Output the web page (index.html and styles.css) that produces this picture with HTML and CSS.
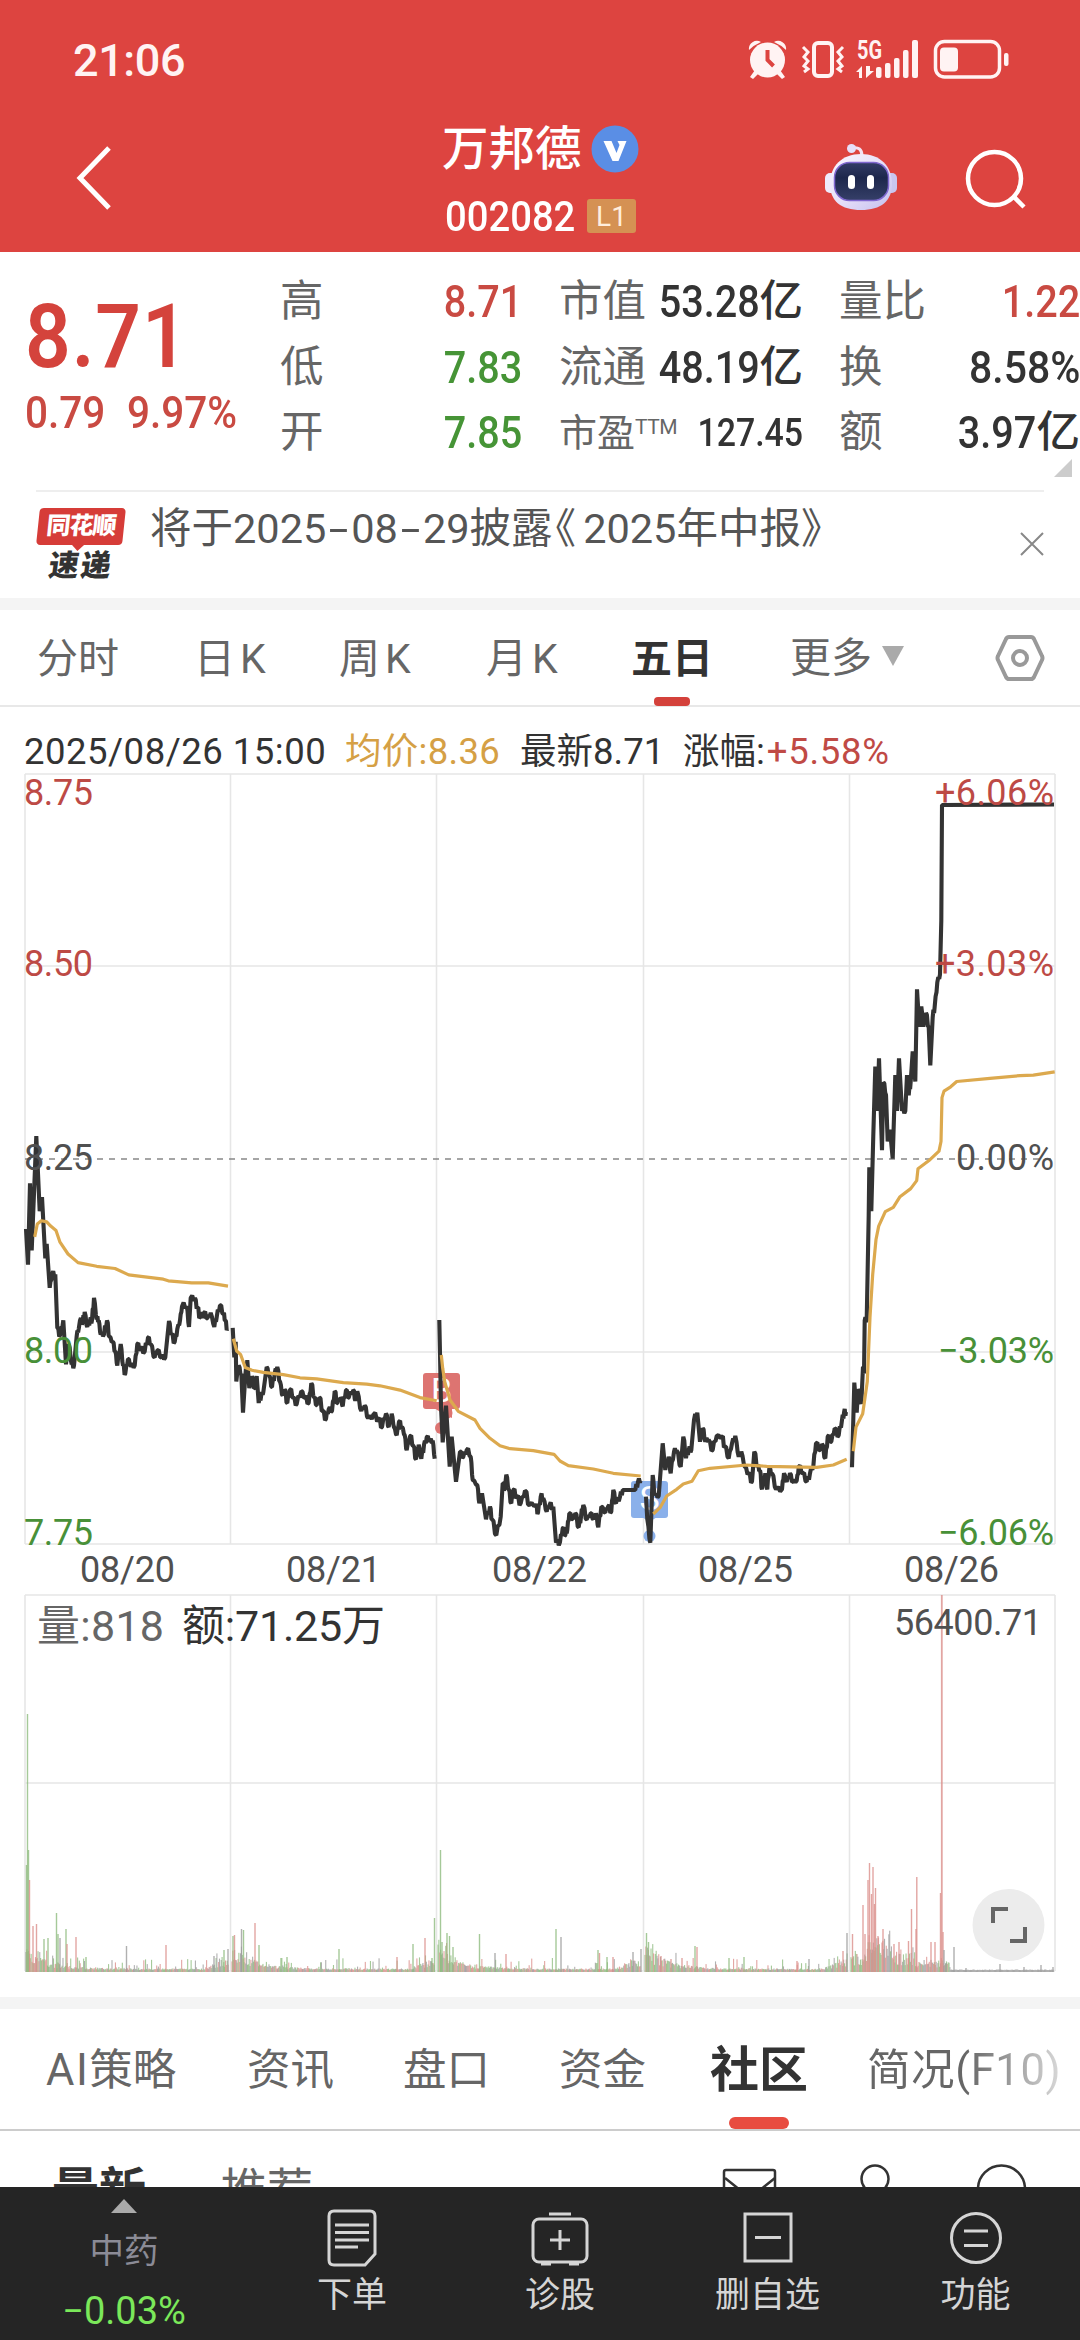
FILE: index.html
```html
<!DOCTYPE html>
<html lang="zh-CN">
<head>
<meta charset="utf-8">
<title>万邦德 002082</title>
<link rel="stylesheet" href="styles.css">
</head>
<body>
<div class="app">
  <header class="top">
    <div class="status">
      <span class="clock">21:06</span>
      <svg class="status-icons" viewBox="740 30 290 60" width="290" height="60">
        <g fill="#fff3f3">
          <circle cx="767.5" cy="60" r="17.5"/>
          <path d="M755 70l-5 7 3 2 6-6zM780 70l5 7-3 2-6-6z"/>
          <path d="M749 50a8 8 0 0 1 12-8q-7 3-12 8zM786 50a8 8 0 0 0-12-8q7 3 12 8z"/>
        </g>
        <path d="M767.5 50v10l6 6" fill="none" stroke="#dd4440" stroke-width="4"/>
        <g fill="none" stroke="#fff3f3">
          <rect x="814" y="43" width="18" height="33" rx="4" stroke-width="4"/>
          <path d="M803 47l5 5-4 5 4 4-4 5 4 3-4 3M843 47l-5 5 4 5-4 4 4 5-4 3 4 3" stroke-width="3"/>
          <rect x="935.500" y="41.500" width="64" height="35.500" rx="9" stroke-width="3.500"/>
        </g>
        <g fill="#fff3f3">
          <rect x="940" y="47.500" width="18" height="24" rx="4"/>
          <rect x="1004" y="53" width="4.500" height="13" rx="2"/>
          <rect x="876" y="67" width="5.500" height="11" rx="2"/><rect x="885" y="63" width="5.500" height="15" rx="2"/>
          <rect x="894" y="58" width="5.500" height="20" rx="2"/><rect x="903" y="50" width="5.500" height="28" rx="2"/>
          <rect x="912" y="40" width="6" height="38" rx="2"/>
          <path d="M856 72l6-6v12h-3v-6zM866 66v12l8-7h-4v-5z"/>
        </g>
        <text class="net" x="857" y="59" textLength="25" lengthAdjust="spacingAndGlyphs">5G</text>
      </svg>
    </div>
    <nav class="titlebar">
      <svg class="back" viewBox="0 0 44 68" width="44" height="68"><path d="M37 4L8 34l29 30" fill="none" stroke="#fff" stroke-width="5"/></svg>
      <div class="title">
        <div class="name">万邦德<svg viewBox="0 0 48 48" width="48" height="48"><circle cx="24" cy="24" r="23.500" fill="#5a8ee5"/><path d="M12.500 16h8l5 12 3-8-2-4h9l-8 20h-6z" fill="#fff"/></svg></div>
        <div class="code"><span class="digits">002082</span><span class="level">L1</span></div>
      </div>
      <svg class="robot" viewBox="824 142 74 70" width="74" height="70">
        <defs><linearGradient id="shell" x1="0" y1="0" x2="1" y2="1"><stop offset="0" stop-color="#fbf8ff"/><stop offset=".55" stop-color="#e4ddf8"/><stop offset="1" stop-color="#c3bfee"/></linearGradient>
        <linearGradient id="visor" x1="0" y1="0" x2="0" y2="1"><stop offset="0" stop-color="#323c66"/><stop offset=".4" stop-color="#1d274c"/><stop offset="1" stop-color="#353f68"/></linearGradient></defs>
        <path d="M852 148q10-2 10 8" fill="none" stroke="#f4e2f2" stroke-width="3"/>
        <circle cx="851.500" cy="148.500" r="4.500" fill="#e6e0fa"/>
        <rect x="825" y="173" width="12" height="20" rx="5" fill="#eeebfc"/><rect x="885" y="173" width="12" height="20" rx="5" fill="#c9c6f0"/>
        <path d="M861 154c19 0 31 12 31 30 0 17-11 26-31 26s-31-9-31-26c0-18 12-30 31-30z" fill="url(#shell)"/>
        <rect x="834.500" y="162.500" width="54" height="38" rx="15" fill="url(#visor)" stroke="#7f67cf" stroke-width="1.500"/>
        <rect x="848" y="175" width="7" height="14" rx="3.500" fill="#fff"/><rect x="867" y="175" width="7" height="14" rx="3.500" fill="#fff"/>
      </svg>
      <svg class="search" viewBox="964 148 64 62" width="64" height="62"><g fill="none" stroke="#fff" stroke-width="4.500"><circle cx="994.500" cy="178.500" r="26.500"/><path d="M1013 196l11 11"/></g></svg>
    </nav>
  </header>

  <section class="quote">
    <div class="price"><div class="big"><span>8.71</span></div><div class="chg"><span>0.79</span><span>9.97%</span></div></div>
    <dl class="stats">
      <dt>高</dt><dd class="red"><span>8.71</span></dd><dt>市值</dt><dd><span>53.28</span>亿</dd><dt>量比</dt><dd class="red"><span>1.22</span></dd>
      <dt>低</dt><dd class="green"><span>7.83</span></dd><dt>流通</dt><dd><span>48.19</span>亿</dd><dt>换</dt><dd><span class="wide">8.58%</span></dd>
      <dt>开</dt><dd class="green"><span>7.85</span></dd><dt class="pe">市盈<sup>TTM</sup></dt><dd class="small"><span>127.45</span></dd><dt>额</dt><dd><span>3.97</span>亿</dd>
    </dl>
    <i class="corner"></i>
  </section>

  <section class="news">
    <div class="brand"><b>同花顺</b><em>速递</em></div>
    <p>将于2025<s>-</s>08<s>-</s>29披露<i>《</i>2025年中报》</p>
    <svg viewBox="0 0 26 26" width="26" height="26"><path d="M2 2l22 22M24 2L2 24" stroke="#888" stroke-width="2"/></svg>
  </section>

  <nav class="periods">
    <span>分时</span><span>日<u>K</u></span><span>周<u>K</u></span><span>月<u>K</u></span><span class="on">五日</span><span class="more">更多<i></i></span>
    <svg viewBox="0 0 50 48" width="50" height="48"><g fill="none" stroke="#999" stroke-width="4"><path d="M14 3h22q2 0 3 2l8 17q1 2 0 4l-8 17q-1 2-3 2H14q-2 0-3-2L3 26q-1-2 0-4l8-17q1-2 3-2z"/><circle cx="25" cy="24" r="7"/></g></svg>
  </nav>

  <div class="legend"><span class="time">2025/08/26 15:00</span><span class="avg">均价:8.36</span><span>最新8.71</span><span>涨幅:<b>+5.58%</b></span></div>

  <div class="charts">
    <svg viewBox="0 770 1080 1210" width="1080" height="1210">
      <g class="grid">
        <path d="M25 774H1055M25 1544H1055M25 966H1055M25 1352H1055M25 774V1544M1055 774V1544M230.500 774V1544M436.500 774V1544M643.500 774V1544M849.500 774V1544"/>
        <path d="M25 1595H1055M25 1783H1055M25 1971H1055M25 1595V1971M1055 1595V1971M230.500 1595V1971M436.500 1595V1971M643.500 1595V1971M849.500 1595V1971"/>
      </g>
      <path class="zero" d="M25 1159H1055"/>
      <g class="buy"><rect x="423" y="1373" width="37" height="36" rx="3"/><path d="M434 1408l8 5 10 5V1408z"/><circle cx="447" cy="1413" r="5.500"/><circle cx="441" cy="1428" r="6"/><text x="441.500" y="1402">B</text></g>
      <g class="sell"><rect x="631" y="1481" width="37" height="37" rx="3"/><path d="M642 1517l7.500 5 7.500-5z"/><circle cx="649.500" cy="1536" r="6"/><text x="649.500" y="1510">S</text></g>
      <g id="price-lines"></g>
      <g id="volume-bars"></g>
      <g class="axis">
        <g class="up"><text x="24" y="804.500" textLength="69">8.75</text><text x="24" y="976" textLength="69">8.50</text><text x="935" y="804.500" textLength="119">+6.06%</text><text x="935" y="976" textLength="119">+3.03%</text></g>
        <text x="24" y="1169.500" textLength="69">8.25</text><text x="956" y="1169.500" textLength="98">0.00%</text>
        <g class="down"><text x="24" y="1363" textLength="69">8.00</text><text x="24" y="1545" textLength="69">7.75</text><text x="938" y="1363" textLength="116">−3.03%</text><text x="938" y="1545" textLength="116">−6.06%</text></g>
        <text x="80" y="1582" textLength="95">08/20</text><text x="286" y="1582" textLength="95">08/21</text><text x="492" y="1582" textLength="95">08/22</text><text x="698" y="1582" textLength="95">08/25</text><text x="904" y="1582" textLength="95">08/26</text>
        <text x="894" y="1634.500" textLength="148">56400.71</text>
      </g>
      <text class="vol" x="37" y="1641" textLength="127">量:818</text>
      <text class="vol dark" x="182" y="1641" textLength="203">额:71.25万</text>
      <circle cx="1008.500" cy="1925" r="36" fill="#ececec"/>
      <path d="M993 1923V1909H1008M1010 1941H1025V1927" fill="none" stroke="#666" stroke-width="4"/>
    </svg>
  </div>

  <nav class="sections">
    <span><u>AI</u>策略</span><span>资讯</span><span>盘口</span><span>资金</span><span class="on">社区</span><span class="fade">简况(F10)</span>
  </nav>
  <div class="feed">
    <b>最新</b><span>推荐</span>
    <svg viewBox="715 2160 320 60" width="320" height="60"><g fill="none" stroke="#333" stroke-width="2.500"><rect x="724" y="2170" width="51" height="40" rx="2"/><path d="M725 2178l25 20 25-20"/><circle cx="875" cy="2179" r="13.500"/><circle cx="1001.500" cy="2189" r="23.500"/></g></svg>
  </div>

  <footer class="bar">
    <div class="index"><i></i><span>中药</span><b>−0.03%</b></div>
    <div><svg viewBox="0 0 60 60" width="60" height="60"><path d="M12 4h36q5 0 5 5v38l-10 11H12q-5 0-5-5V9q0-5 5-5zM13 18h34M13 25.500h34M13 33h34M13 40h23"/></svg><span>下单</span></div>
    <div><svg viewBox="0 0 60 60" width="60" height="60"><rect x="3" y="12" width="54" height="43" rx="6"/><path d="M19 7h22M30 23v20M20 33h20M11 57h10M39 57h10"/></svg><span>诊股</span></div>
    <div><svg viewBox="0 0 60 60" width="60" height="60"><rect x="7" y="7" width="46" height="47"/><path d="M17 30.500h26"/></svg><span>删自选</span></div>
    <div><svg viewBox="0 0 60 60" width="60" height="60"><circle cx="30" cy="31" r="24.500"/><path d="M18 24h24M18 38.500h24"/></svg><span>功能</span></div>
  </footer>
</div>
<script src="chart.js"></script>
</body>
</html>
```
FILE: styles.css
```css
* { box-sizing: border-box; }
body { margin: 0; background: #fff; font-family: Roboto, "Noto Sans CJK SC", sans-serif; color: #333; }
.app { width: 1080px; height: 2340px; overflow: hidden; display: flex; flex-direction: column; position: relative; }
svg { display: block; flex: none; }

.top { height: 252px; background: #dd4440; color: #fff; }
.status { height: 120px; display: flex; justify-content: space-between; padding: 30px 50px 0 73px; }
.clock { font-size: 45px; font-weight: 500; line-height: 61px; color: #fff3f3; letter-spacing: -.4px; }
.net { font-size: 25px; font-weight: 700; fill: #fff3f3; }
.titlebar { display: flex; height: 132px; align-items: flex-start; }
.back { margin: 24px 0 0 72px; }
.title { margin-left: 326px; width: 200px; }
.name { display: flex; align-items: center; gap: 9px; font-size: 46.5px; font-weight: 500; line-height: 60px; height: 58px; white-space: nowrap; }
.code { display: flex; align-items: center; line-height: 50px; height: 50px; margin-top: 14px; padding-left: 3px; }
.digits { font-size: 42px; font-weight: 500; width: 142px; transform: scaleX(.91); transform-origin: left; }
.level { width: 49px; height: 34px; margin-top: -3px; line-height: 35px; font-size: 28px; text-align: center; background: #d59153; border-radius: 3px; color: #ffeedd; }
.robot { margin: 22px 0 0 182px; }
.search { margin: 28px 0 0 66px; }

.quote { height: 238px; display: flex; position: relative; }
.price { width: 280px; padding: 40px 0 0 25px; color: #d4433c; }
.big { height: 89px; line-height: 89px; font-size: 89px; font-weight: 600; }
.big span, .chg span { display: inline-block; transform: scaleX(.9); transform-origin: left; }
.chg { height: 55px; line-height: 55px; font-size: 45px; font-weight: 500; color: #c94a42; display: flex; margin-top: 4px; }
.chg span { width: 102px; }
.big span { letter-spacing: 1px; }
.stats { margin: 17px 0 0; display: grid; grid-template-columns: 100px 142px 88px 153px 108px 130px; grid-template-rows: 66px 65px 66px; width: 800px; line-height: 66px; font-size: 43.5px; }
.stats dt { color: #666; white-space: nowrap; }
.stats dt:nth-of-type(3n+2) { margin-left: 37px; }
.stats dt:nth-of-type(3n) { margin-left: 76px; }
.stats dd { margin: 0; text-align: right; font-weight: 500; white-space: nowrap; display: flex; justify-content: flex-end; }
.stats dd span { font-size: 45px; transform: scaleX(.88); transform-origin: right; }
.stats dd span.wide { transform: scaleX(.91); }
.stats dd:nth-of-type(3n+2) { margin-right: -40px; }
.stats dd:nth-of-type(3n) { margin-right: -79px; width: 209px; }
.stats .red { color: #c94a42; }
.stats .green { color: #469436; }
.stats .pe { font-size: 38px; }
.stats sup { font-size: 21px; line-height: 0; vertical-align: 12px; letter-spacing: -.5px; }
.stats .small span { font-size: 38.500px; }
.corner { position: absolute; right: 8px; bottom: 13px; border-left: 18px solid transparent; border-bottom: 18px solid #ccc; }

.news { height: 120px; border-bottom: 12px solid #f4f4f4; display: flex; align-items: flex-start; padding-left: 36px; background: linear-gradient(#eee, #eee) 36px 0 / 1008px 2px no-repeat; }
.brand { width: 90px; margin-top: 18px; display: flex; flex-direction: column; align-items: center; position: relative; }
.brand b { width: 86px; height: 37px; background: #d63c38; border-radius: 4px; transform: skewX(-6deg); color: #fff; font-size: 24px; font-weight: 900; line-height: 36px; text-align: center; letter-spacing: -1px; }
.brand b::after { content: ""; position: absolute; left: 35px; top: 36px; border: 7px solid transparent; border-top-color: #d63c38; border-bottom: 0; }
.brand em { font-size: 30px; font-weight: 900; line-height: 34px; margin-top: 4px; letter-spacing: 2px; font-style: normal; transform: skewX(-8deg); }
.news p { margin: 9px 0 0 24px; width: 869px; font-size: 41.500px; line-height: 60px; color: #555; white-space: nowrap; }
.news s { display: inline-block; text-decoration: none; transform: scaleX(1.7); width: 25px; text-align: center; }
.news p i { font-style: normal; margin: 0 7px 0 -18px; }
.news > svg { margin-top: 41px; }

.periods { height: 97px; border-bottom: 2px solid #e8e8e8; display: flex; font-size: 41px; color: #666; line-height: 98px; white-space: nowrap; }
.periods span:first-child { margin-left: 37px; width: 157px; }
.periods span:nth-child(2) { width: 145px; }
.periods span:nth-child(3) { width: 147px; }
.periods span:nth-child(4) { width: 144px; }
.periods u { text-decoration: none; margin-left: 5px; font-size: 41px; }
.periods .on { width: 84px; margin-right: 76px; color: #333; font-weight: 700; display: flex; flex-direction: column; align-items: center; }
.periods .on::after, .sections .on::after { content: ""; flex: none; width: 36px; height: 9px; border-radius: 4px; background: #d4413b; margin-top: -11px; }
.more { display: flex; align-items: center; width: 205px; }
.more i { border: 11px solid transparent; border-top: 20px solid #aaa; border-bottom: 0; margin-left: 10px; margin-top: -4px; }
.periods > svg { margin-top: 24px; }

.legend { height: 63px; padding: 15px 0 0 24px; display: grid; grid-template-columns: 321px 175px 163px auto; font-size: 36.500px; line-height: 60px; white-space: nowrap; }
.legend .time { letter-spacing: .5px; }
.legend b { font-weight: 400; color: #c04a45; margin-left: 2px; letter-spacing: .7px; }
.legend .avg { color: #d5a045; letter-spacing: .3px; }

.charts { height: 1227px; }
.grid path { fill: none; stroke: #e6e6e6; stroke-width: 1.600; }
.zero { stroke: #888; stroke-width: 1.500; stroke-dasharray: 6 6; fill: none; }
.axis text { font-size: 36px; fill: #505050; }
.axis .up text { fill: #bd4a45; }
.axis .down text { fill: #489038; }
.vol { font-size: 43px; fill: #666; }
.vol.dark { fill: #333; }
.buy { fill: #dd7471; }
.sell { fill: #8ab0ea; }
.buy text, .sell text { fill: #fff; font-size: 34px; text-anchor: middle; }
.avg-line { fill: none; stroke: #dca94e; stroke-width: 3.200; stroke-linejoin: round; }
.price-line { fill: none; stroke: #333; stroke-width: 4.100; stroke-linejoin: bevel; }

.sections { height: 134px; border-top: 12px solid #f4f4f4; border-bottom: 2px solid #ccc; display: flex; font-size: 43.500px; line-height: 123px; color: #666; white-space: nowrap; padding-left: 46px; }
.sections u { text-decoration: none; letter-spacing: 1.500px; }
.sections span { width: 156px; }
.sections span:first-child { width: 201px; }
.sections span:nth-child(4) { width: 149px; }
.sections .on { width: 102px; margin-right: 57px; color: #333; font-size: 49px; font-weight: 700; display: flex; flex-direction: column; align-items: center; }
.sections .on::after { width: 60px; height: 12px; border-radius: 6px; background: #e84c40; margin-top: -15px; }
.sections .fade { width: 197px; letter-spacing: .6px; background: linear-gradient(90deg, #666 50%, #ddd); -webkit-background-clip: text; background-clip: text; color: transparent; }
.feed { height: 56px; overflow: hidden; display: flex; align-items: flex-start; padding: 23px 0 0 52px; font-size: 47px; line-height: 72px; }
.feed b { width: 169px; }
.feed span { font-size: 46px; color: #666; width: 494px; }
.feed svg { margin-top: 6px; }

.bar { height: 153px; background: #252525; display: grid; grid-template-columns: 248px 208px 208px 207px 209px; color: #d5d5d5; }
.bar div { display: flex; flex-direction: column; align-items: center; font-size: 35px; line-height: 50px; }
.bar svg { margin-top: 20px; fill: none; stroke: #d5d5d5; stroke-width: 3; }
.bar div > span { margin-top: 4px; }
.bar .index i { margin-top: 12px; border: 13px solid transparent; border-bottom: 14px solid #aaa; border-top: 0; }
.bar .index span { font-size: 34.500px; color: #8b8b96; margin-top: 13px; }
.bar .index b { font-size: 38px; font-weight: 400; color: #7be85a; margin-top: 10px; line-height: 50px; }
```
FILE: chart.js
```js
const NS = "http://www.w3.org/2000/svg";
const add = (parent, tag, attrs) => {
  const el = document.createElementNS(NS, tag);
  for (const k in attrs) el.setAttribute(k, attrs[k]);
  parent.appendChild(el);
};
let seed = 7;
const rnd = () => (seed = (seed * 16807) % 2147483647) / 2147483647;

// each trading session: origin, unit size, minute prices and average line
const left = { ox: 0, oy: 760, sx: 1 / 3, sy: 0.5358 };
const mid = { ox: 400, oy: 1240, sx: 1 / 3, sy: 1 / 3 };
const right = { ox: 820, oy: 760, sx: 1 / 3, sy: 0.5358 };
const sessions = [
  { ...left,
    price: "78,875 84,942 90,790 95,915 109,702 119,842 126,816 136,930 140,903 149,985 156,960 166,960 172,1060 180,1074 190,1046 198,1128 206,1090 215,1128 222,1130 230,1075 236,1062 240,1046 248,1050 254,1030 262,1058 270,1046 276,1046 282,1004 290,1044 296,1046 302,1072 312,1072 321,1046 328,1076 338,1086 346,1104 352,1130 362,1090 369,1130 376,1145 384,1118 392,1130 404,1130 412,1090 420,1100 434,1104 444,1078 452,1090 464,1115 472,1102 484,1115 496,1115 507,1047 514,1072 524,1086 532,1062 540,1046 546,1020 560,1020 567,1058 572,1004 585,1004 592,1022 600,1040 612,1032 622,1042 632,1032 643,1058 650,1040 660,1018 670,1034 676,1046 682,1062",
    avg: "104,890 112,866 124,860 140,862 152,870 168,878 180,900 204,922 234,938 290,945 345,949 386,961 490,969 505,972 575,976 625,976 684,982" },
  { ...left,
    price: "698,1060 703,1115 707,1086 709,1160 716,1130 724,1145 729,1218 736,1150 742,1120 748,1172 756,1150 764,1172 770,1150 776,1200 784,1185 790,1180 800,1133 808,1148 816,1170 824,1145 832,1133 840,1160 848,1186 854,1175 862,1200 870,1175 880,1190 890,1202 904,1178 914,1190 926,1200 934,1163 942,1190 950,1204 958,1190 968,1215 978,1230 986,1212 996,1215 1004,1178 1012,1200 1022,1190 1028,1206 1038,1176 1046,1190 1060,1176 1066,1196 1072,1178 1084,1215 1094,1205 1104,1228 1120,1222 1136,1230 1146,1245 1158,1220 1166,1245 1175,1220 1182,1245 1190,1260 1197,1235 1206,1245 1214,1260 1220,1288 1230,1262 1240,1280 1248,1305 1256,1278 1264,1304 1272,1278 1280,1264 1290,1270 1298,1270 1304,1304",
    avg: "700,1080 710,1103 722,1110 736,1134 756,1139 790,1143 850,1147 900,1153 950,1155 1030,1162 1100,1165 1140,1168 1200,1176 1260,1190 1310,1196" },
  { ...mid,
    price: "118,240 120,340 123,500 128,607 138,497 149,680 155,590 168,725 180,635 190,650 200,630 212,650 218,720 232,735 238,790 246,760 258,838 270,800 276,838 289,886 302,830 308,730 314,748 319,704 326,748 334,790 340,750 350,770 362,790 375,752 388,795 408,795 414,818 422,770 430,775 440,815 448,797 460,800 468,908 480,906 488,865 496,886 502,870 508,820 518,838 526,820 536,862 543,830 550,795 560,838 572,820 580,838 588,820 595,862 604,800 616,818 624,800 634,815 640,750 648,790 660,770 668,750 706,750 714,725 722,722",
    avg: "124,345 128,385 134,425 150,480 175,514 225,540 240,565 270,595 300,617 330,626 400,632 462,643 480,663 505,677 580,687 640,700 722,708" },
  { ...mid,
    price: "738,770 742,838 751,908 758,705 764,765 776,768 788,610 796,690 806,650 812,700 822,635 830,632 842,680 850,590 858,655 866,630 874,630 882,540 892,518 900,605 908,565 916,605 926,600 938,630 950,588 966,590 974,620 986,655 996,610 1006,588 1016,650 1024,635 1034,680 1046,700 1056,725 1063,635 1072,680 1080,690 1086,748 1096,700 1102,748 1108,685 1116,700 1128,748 1146,748 1152,700 1160,725 1170,700 1178,725 1190,722 1196,680 1208,700 1220,725 1230,700 1240,680 1248,610 1260,630 1266,612 1276,655 1283,590 1294,605 1304,565 1316,586 1326,540 1332,518 1338,516",
    avg: "760,822 780,803 800,768 830,748 850,732 876,724 895,692 930,685 1040,675 1100,679 1250,682 1300,675 1340,658" },
  { ...right,
    price: "96,1320 103,1162 110,1218 116,1174 124,1202 129,1132 132,1145 134,1046 140,1045 146,850 148,760 154,842 160,700 166,572 172,655 177,557 186,728 190,602 198,625 203,712 210,690 218,744 226,588 231,655 237,557 246,655 256,655 261,588 266,626 272,600 278,544 286,600 291,428 298,498 304,460 310,498 318,472 326,498 331,570 338,480 344,460 352,415 360,400 364,300 366,84 702,83",
    avg: "100,1290 108,1245 128,1220 142,1160 150,1040 158,960 168,895 176,870 196,843 220,835 240,815 272,800 290,785 294,763 330,746 357,730 363,712 366,630 372,618 392,610 410,600 510,594 600,589 640,588 704,582" }
];
const lines = document.getElementById("price-lines");
for (const s of sessions) {
  const pts = str => str.split(" ").map(p => p.split(",").map(Number)).map(([x, y]) => [s.ox + x * s.sx, s.oy + y * s.sy]);
  const raw = pts(s.price), out = [];
  raw.forEach((p, i) => {
    out.push(p);
    const q = raw[i + 1];
    if (!q) return;
    const dx = q[0] - p[0], dy = Math.abs(q[1] - p[1]);
    if (dx < 2 || dx > 12 || dy > 25) return;
    // one tick of flutter inside calm stretches
    out.push([p[0] + dx * .35, p[1] + (q[1] - p[1]) * .35 - 1 - rnd() * 3]);
    out.push([p[0] + dx * .7, p[1] + (q[1] - p[1]) * .7 + 1 + rnd() * 3]);
  });
  const str = a => a.map(p => p.map(n => n.toFixed(1)).join(",")).join(" ");
  add(lines, "polyline", { class: "price-line", points: str(out) });
  add(lines, "polyline", { class: "avg-line", points: str(pts(s.avg)) });
}

const bars = document.getElementById("volume-bars");
const colors = { g: "#8fbb80", r: "#db8f8b", k: "#9c9c9c" };
const bar = (x, h, c, w = 1.3) => add(bars, "rect", { x: (x - w / 2).toFixed(2), y: (1972 - h).toFixed(1), width: w, height: h.toFixed(1), fill: colors[c], opacity: .8 });
[26, 232, 438, 645, 851].forEach((x0, d) => {
  for (let i = 0; i < 236; i++) {
    const x = x0 + i * .86;
    let h = 2 + 26 * Math.exp(-i / 24) + (i > 205 ? (i - 205) * .35 : 0);
    if (d === 4) h = i < 20 ? 16 : i < 48 ? 38 : i < 75 ? 17 : i < 108 ? 10 : i < 116 ? 10 : 1;
    const calm = d === 4 && i > 115;
    const burst = rnd() > .82 && !calm ? 11 : 0;
    const pick = rnd();
    bar(x, h * (.3 + rnd() * .7) + burst * rnd() + 1.5, calm || pick > .72 ? "k" : pick > .36 ? "g" : "r", 1.1);
  }
});
("26.5 107 g,27.5 258 g,28.5 122 g,29.5 92 r,33 46 r,36.5 48 r,44 33 g,48 34 g,56.5 59 g,58 38 g,60 34 k,66 43 g,67 28 r,76 35 r,86 15 g,126.500 26 k,166 27 r,214 16 k,224 22 g,228 23 k," +
 "233 36 g,234.5 37 r,241.5 43 k,243.5 42 g,255 49 r,259 27 g,281 14 g,287 15 g,339 23 g,397 15 r,413 28 g,425 34 r,432 14 g,434.5 54 g," +
 "440.5 122 g,442 30 g,447 39 g,449.5 36 g,453 25 g,479.5 38 g,495 19 k,506 18 r,556 43 g,561 35 k,598 22 g,599.5 19 r,607 15 g,613 15 r,633 20 k,641 23 k," +
 "646.5 39 g,648.5 30 g,661 16 r,671 13 r,682 14 r,695 26 g,697 25 r,729 14 g,744 15 g,797 11 r,809 13 k,843 21 r,847 39 k," +
 "852.5 38 r,863 67 r,865 38 r,868 92 r,869.5 109 r,871.5 78 r,873 105 r,874.5 68 r,875.5 84 r,878 36 r,883 43 r,894 28 r,899 30 r,908.5 31 r,911.5 63 r,916 43 r,916.8 95 r,931 30 r,935 30 r,940.5 79 r,943 40 r,944 22 k,946 9 k,954 25 k,966 4 k,1000 8 k,1024 5 k,1041 7 k,1053 5 k")
  .split(",").forEach(t => { const [x, h, c] = t.split(" "); bar(+x, +h, c, 1.4); });
bar(941.8, 377, "r", 1.8);
```
